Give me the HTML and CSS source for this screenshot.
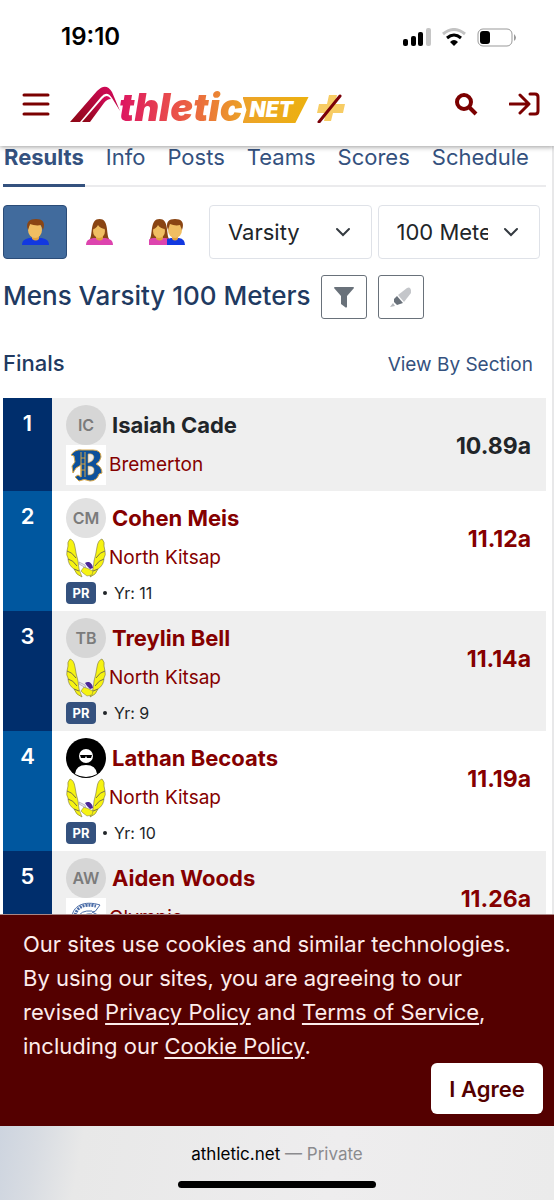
FILE: index.html
```html
<!doctype html>
<html lang="en">
  <head>
    <meta charset="utf-8">
    <title>Mens Varsity 100 Meters - Athletic.net</title>
    <meta name="viewport" content="width=device-width, initial-scale=1">
    <link rel="stylesheet" href="styles.css">
  </head>
  <body>
    <svg class="defs" aria-hidden="true">
      <defs>
        <g id="man-head">
          <path d="M0 26c0-5 4-7 9-7h9c5 0 9 2 9 7z" fill="#1238e0" />
          <path d="M10 15h7v5q-3 3-7 0z" fill="#e0a040" />
          <ellipse cx="13" cy="11" rx="7" ry="8" fill="#f0be62" />
          <path d="M6 11C3 3 8 0 14 0s10 3 7 11l-2-5c-4 1-8 0-11-1z" fill="#8a4513" />
        </g>
        <g id="woman-head">
          <path d="M4 20C7 14 4 0 13.500 0S20 14 23 20z" fill="#8a4513" />
          <path d="M0 26c0-5 4-7 9-7h9c5 0 9 2 9 7z" fill="#dd44ae" />
          <path d="M10 15h7v5q-3 3-7 0z" fill="#e0a040" />
          <ellipse cx="13" cy="12" rx="6" ry="7" fill="#f0be62" />
          <path d="M7 10c0-5 3-7 7-7s6 3 6 7c-4 0-7-2-8-4-1 2-3 4-5 4z" fill="#8a4513" />
        </g>
        <symbol id="viking" viewBox="0 0 40 40">
          <g fill="#f6f312" stroke="#77724a" stroke-width=".6">
            <path d="M4 1q4 1 5 8 1 7 3 14 0 8 4 16-6-2-8-8-6-4-6-11-2-3-1-7l1-5q-1-4 2-7z" />
            <path d="M1 13q5 1 9 7M2 21q5 1 9 7M8 31l5 2" fill="none" stroke-width="1" />
            <path d="M36 1q-4 1-5 8-1 7-3 14 0 8-4 16 6-2 8-8 6-4 6-11 2-3 1-7l-1-5q1-4-2-7z" />
            <path d="M39 13q-5 1-9 7M38 21q-5 1-9 7M32 31l-5 2" fill="none" stroke-width="1" />
            <path d="M15 33l3-4 5 2 4 2-1 4-5 1-4-3z" stroke-width=".5" />
          </g>
          <path d="M19 25c3-2 7-1 8 5l-3 1-3-3z" fill="#4b2797" />
          <path d="M13 24l6 3 1 3-7-4z" fill="#e4e2ea" stroke="#88819b" stroke-width=".5" />
        </symbol>
      </defs>
    </svg>

    <div class="status-bar">
      <span class="clock">19:10</span>
      <div class="status-icons">
        <svg width="28" height="19" viewBox="0 0 28 19">
          <rect x="0" y="11" width="5" height="7" rx="2" />
          <rect x="8" y="8" width="5" height="10" rx="2" />
          <rect x="15" y="4" width="5" height="14" rx="2" />
          <rect x="23" y="0" width="5" height="18" rx="2" fill="#c6c6c6" />
        </svg>
        <svg width="24" height="18" viewBox="0 0 24 18" fill="none" stroke-width="3">
          <path d="M1 6q11-9 22 0" stroke="#c3c3c3" />
          <path d="M5 10q7-6 14 0" stroke="#000" />
          <path d="M8 14q4-4 8 0l-4 4z" fill="#000" />
        </svg>
        <svg width="40" height="19" viewBox="0 0 40 19">
          <rect x="1" y="1" width="34" height="17" rx="5" fill="none" stroke="#999" />
          <rect x="3" y="3" width="10" height="13" rx="3" />
          <path d="M37 6q4 4 0 7z" fill="#999" />
        </svg>
      </div>
    </div>

    <header class="header">
      <button class="icon-button menu" aria-label="Menu">
        <svg width="28" height="24" viewBox="0 0 28 24" stroke="currentColor" stroke-width="3">
          <path d="M2 3h24M2 12h24M2 22h24" stroke-linecap="round" />
        </svg>
      </button>
      <a href="#" class="logo">
        <svg width="52" height="38" viewBox="0 0 52 38">
          <defs>
            <linearGradient id="mark" x1="0" y1="1" x2="1" y2="0">
              <stop offset="0" stop-color="#8c0714" />
              <stop offset="1" stop-color="#d90a60" />
            </linearGradient>
          </defs>
          <path d="M0 37L27 6Q36-3 42 7l8 19-8-13q-5-8-11-1L10 37z" fill="url(#mark)" />
          <path d="M12 37l20-23q5-6 9 0-4 0-7 4L20 37z" fill="url(#mark)" />
        </svg>
        <span class="logo-text">thletic</span>
        <span class="logo-net">NET</span>
        <svg class="logo-plus" width="28" height="29" viewBox="0 0 28 29">
          <path d="M12 1h8l-2 9h10l-2 9H16l-2 8H7l2-8H0l2-9h8z" fill="#f7cc64" />
          <path d="M2 28L23 2" stroke="#7b0008" stroke-width="3" stroke-linecap="round" />
        </svg>
      </a>
      <div class="header-actions">
        <button class="icon-button" aria-label="Search">
          <svg width="24" height="24" viewBox="0 0 24 24" fill="none" stroke="currentColor">
            <circle cx="10" cy="10" r="7" stroke-width="4" />
            <path d="M15 15l7 7" stroke-width="4" />
          </svg>
        </button>
        <button class="icon-button" aria-label="Log in">
          <svg width="31" height="24" viewBox="0 0 31 24" fill="none" stroke="currentColor" stroke-width="3" stroke-linecap="round" stroke-linejoin="round">
            <path d="M1 12h18M11 3l9 9-9 9M21 2h5q3 0 3 3v14q0 3-3 3h-5" />
          </svg>
        </button>
      </div>
    </header>

    <main class="content">
      <nav class="tabs">
        <a href="#" class="tab active">Results</a>
        <a href="#" class="tab">Info</a>
        <a href="#" class="tab">Posts</a>
        <a href="#" class="tab">Teams</a>
        <a href="#" class="tab">Scores</a>
        <a href="#" class="tab">Schedule</a>
      </nav>

      <div class="filters">
        <div class="genders">
          <button class="gender active" aria-label="Mens">
            <svg width="27" height="26" viewBox="0 0 27 26"><use href="#man-head" /></svg>
          </button>
          <button class="gender" aria-label="Womens">
            <svg width="27" height="26" viewBox="0 0 27 26"><use href="#woman-head" /></svg>
          </button>
          <button class="gender both" aria-label="Both">
            <svg width="36" height="26" viewBox="0 0 36 26">
              <use href="#woman-head" x="-3" />
              <path d="M18 26v-6q6-2 12-1 6 1 6 7z" fill="#1238e0" />
              <path d="M23 15h6v5q-3 3-6 0z" fill="#e0a040" />
              <ellipse cx="26" cy="11" rx="7" ry="8" fill="#f0be62" />
              <path d="M19 11c-3-8 1-11 7-11s10 3 7 11l-2-5c-4 1-7 0-10-1z" fill="#8a4513" />
            </svg>
          </button>
        </div>
        <div class="select">
          <select aria-label="Division">
            <option>Varsity</option>
            <option>Junior Varsity</option>
          </select>
          <svg class="chevron" width="16" height="10" viewBox="0 0 16 10"><path d="M2 2l6 6 6-6" /></svg>
        </div>
        <div class="select">
          <select aria-label="Event">
            <option>100 Meters</option>
            <option>200 Meters</option>
          </select>
          <svg class="chevron" width="16" height="10" viewBox="0 0 16 10"><path d="M2 2l6 6 6-6" /></svg>
        </div>
      </div>

      <div class="event">
        <h1>Mens Varsity 100 Meters</h1>
        <button class="tool" aria-label="Filter">
          <svg width="20" height="21" viewBox="0 0 20 21"><path d="M0 1q0-1 1-1h18q1 0 1 1L13 9v11q-1 1-2 0l-4-3V9z" fill="#69717a" /></svg>
        </button>
        <button class="tool" aria-label="Highlight">
          <svg width="22" height="20" viewBox="0 0 22 20">
            <path d="M8 8l9-7q2-1 3 0l1 2v3l-7 9z" fill="#c4c6ca" />
            <path d="M7 9l6 7-3 1-3 1-3-3 0-3z" fill="#69717a" />
            <path d="M3 16l2 3-5 1z" fill="#b4b7bc" />
          </svg>
        </button>
      </div>

      <div class="round">
        <h2>Finals</h2>
        <a href="#">View By Section</a>
      </div>

      <table class="results">
        <tbody>
          <tr>
            <td class="place">1</td>
            <td class="athlete">
              <div class="line"><span class="avatar">IC</span><strong class="name plain">Isaiah Cade</strong></div>
              <div class="line">
                <svg class="crest" viewBox="0 0 40 40">
                  <path d="M0 0h40v40H0z" fill="#fff" />
                  <path d="M5 10q4-6 11-5h11q8 0 8 7-1 5-5 7 6 3 6 9l-3 1q-2 7-9 7-6-3-11 0l-4-4 3-2 3 2V20l-5 3-3 5-1-7 3-4-1-6z" fill="#0c509b" stroke="#d6a546" stroke-width="1" />
                  <path d="M22 9q5-1 6 3 0 4-6 6zM22 21q7 0 6 5 0 4-6 4z" fill="#efefef" stroke="#d6a546" stroke-width=".6" />
                  <path d="M15 7v25M19 7v25M15 13h4M15 19h4M15 25h4" stroke="#d6a546" fill="none" />
                </svg>
                <a href="#" class="team">Bremerton</a>
              </div>
            </td>
            <td class="mark plain">10.89a</td>
          </tr>
          <tr>
            <td class="place">2</td>
            <td class="athlete">
              <div class="line"><span class="avatar">CM</span><a href="#" class="name">Cohen Meis</a></div>
              <div class="line"><svg class="crest"><use href="#viking" /></svg><a href="#" class="team">North Kitsap</a></div>
              <div class="meta"><span class="pr">PR</span><span class="dot"></span>Yr: 11</div>
            </td>
            <td class="mark"><a href="#">11.12a</a></td>
          </tr>
          <tr>
            <td class="place">3</td>
            <td class="athlete">
              <div class="line"><span class="avatar">TB</span><a href="#" class="name">Treylin Bell</a></div>
              <div class="line"><svg class="crest"><use href="#viking" /></svg><a href="#" class="team">North Kitsap</a></div>
              <div class="meta"><span class="pr">PR</span><span class="dot"></span>Yr: 9</div>
            </td>
            <td class="mark"><a href="#">11.14a</a></td>
          </tr>
          <tr>
            <td class="place">4</td>
            <td class="athlete">
              <div class="line">
                <svg class="crest" viewBox="0 0 40 40">
                  <circle cx="20" cy="20" r="20" />
                  <circle cx="20" cy="18" r="7" fill="#fff" />
                  <path d="M9 36q1-9 11-9t11 9q-11 6-22 0z" fill="#fff" />
                  <path d="M14 17h12l-1 3-4 0-1-2-1 2h-4z" />
                </svg>
                <a href="#" class="name">Lathan Becoats</a>
              </div>
              <div class="line"><svg class="crest"><use href="#viking" /></svg><a href="#" class="team">North Kitsap</a></div>
              <div class="meta"><span class="pr">PR</span><span class="dot"></span>Yr: 10</div>
            </td>
            <td class="mark"><a href="#">11.19a</a></td>
          </tr>
          <tr>
            <td class="place">5</td>
            <td class="athlete">
              <div class="line"><span class="avatar">AW</span><a href="#" class="name">Aiden Woods</a></div>
              <div class="line">
                <svg class="crest" viewBox="0 0 40 40">
                  <path d="M0 0h40v40H0z" fill="#fff" />
                  <g fill="none" stroke="#4b6da8">
                    <path d="M6 20C6 8 18 2 34 7l-3 4q-1 3-5 3l8 4" />
                    <path d="M9 20C9 10 17 5 30 8" stroke-width="3" stroke-dasharray="2 1" />
                    <path d="M12 20q2-8 14-7M16 20q2-5 10-4" />
                  </g>
                </svg>
                <a href="#" class="team">Olympic</a>
              </div>
            </td>
            <td class="mark"><a href="#">11.26a</a></td>
          </tr>
        </tbody>
      </table>
    </main>

    <section class="cookies">
      <p>Our sites use cookies and similar technologies. By using our sites, you are agreeing to our revised <a href="#">Privacy Policy</a> and <a href="#">Terms of Service</a>, including our <a href="#">Cookie Policy</a>.</p>
      <button>I Agree</button>
    </section>

    <footer class="browser-bar">
      <div>athletic.net <span>— Private</span></div>
      <div class="home-indicator"></div>
    </footer>
  </body>
</html>
```

FILE: styles.css
```css
* {
  margin: 0;
  padding: 0;
  box-sizing: border-box;
}

body {
  height: 100vh;
  overflow: hidden;

  display: flex;
  flex-direction: column;

  font-family: Inter, "Liberation Sans", sans-serif;
  font-size: 22px;
  line-height: 26px;
  color: #212529;
  background: #fff;
}

a {
  color: inherit;
  text-decoration: none;
}

button, select {
  font: inherit;
  color: inherit;
  background: none;
  border: none;
}

svg {
  display: block;
  flex: none;
}

.defs {
  position: absolute;
  width: 0;
  height: 0;
}

/* phone status bar */

.status-bar {
  position: relative;
  z-index: 2;
  flex: none;
  height: 74px;
  padding: 0 37px 0 61px;

  display: flex;
  align-items: center;
  justify-content: space-between;

  background: #fff;
}

.clock {
  font-size: 24px;
  font-weight: 600;
  color: #000;
}

.status-icons {
  display: flex;
  align-items: center;
  gap: 11px;
}

/* site header */

.header {
  position: relative;
  z-index: 1;
  flex: none;
  height: 72px;
  padding: 0 14px 12px 22px;

  display: flex;
  align-items: center;

  background: #fff;
  box-shadow: 0 1px 5px rgba(0, 0, 0, 0.4);
}

.icon-button {
  color: #7b0000;
}

.logo {
  margin-left: 20px;
  height: 38px;

  display: flex;
  align-items: flex-end;
}

.logo-text {
  margin-left: -3px;

  font-size: 38px;
  font-weight: 900;
  font-style: italic;
  line-height: 32px;

  color: transparent;
  background: linear-gradient(90deg, #dc1462, #ea514a 45%, #eca226);
  background-clip: text;
  -webkit-background-clip: text;
}

.logo-net {
  width: 66px;
  height: 26px;
  padding-left: 7px;

  font-size: 21px;
  font-weight: 900;
  font-style: italic;
  color: #fff;
  background: linear-gradient(90deg, #eda32a, #ecb10e);
  clip-path: polygon(0 0, 100% 0, 80% 100%, 0 100%, 6% 50%);
}

.logo-plus {
  margin-left: 8px;
}

.header-actions {
  margin-left: auto;

  display: flex;
  gap: 31px;
}

/* meet content */

.content {
  flex: 1;
  min-height: 0;
  overflow: hidden;
  padding: 0 6px 0 3px;

  border-right: 2px solid #e8e8e9;
}

.tabs {
  height: 41px;

  display: flex;
  gap: 20px;

  color: #34517e;
  border-bottom: 2px solid #ebebed;
}

.tab {
  height: 41px;
  padding: 0 1px;

  line-height: 22px;
}

.tab.active {
  font-weight: 700;
  border-bottom: 3px solid #34517e;
}

.filters {
  margin: 18px 6px 0 0;
  height: 54px;

  display: flex;
  gap: 6px;
}

.genders {
  display: flex;
}

.gender {
  width: 64px;

  display: flex;
  align-items: center;
  justify-content: center;

  border-radius: 4px;
}

.gender.active {
  background: #416b9d;
  border: 1px solid #2b4c78;
}

.gender.both {
  width: 72px;
}

.select {
  position: relative;
  flex: 1;
  min-width: 0;
}

.select select {
  width: 100%;
  height: 100%;
  padding: 0 51px 0 18px;

  appearance: none;
  border: 1px solid #dfe2e8;
  border-radius: 4px;
}

.chevron {
  position: absolute;
  top: 22px;
  right: 21px;

  pointer-events: none;
  fill: none;
  stroke: #343a40;
  stroke-width: 2;
  stroke-linecap: round;
}

.event {
  margin-top: 16px;

  display: flex;
  align-items: center;
  gap: 11px;

  color: #213a61;
}

h1 {
  padding-bottom: 3px;

  font-size: 26px;
  font-weight: 500;
  line-height: 30px;
  white-space: nowrap;
}

.tool {
  width: 46px;
  height: 44px;

  display: flex;
  align-items: center;
  justify-content: center;

  border: 1px solid #69717a;
  border-radius: 3px;
}

.round {
  height: 26px;
  margin: 31px 13px 22px 0;

  display: flex;
  align-items: baseline;
  justify-content: space-between;

  color: #213a61;
}

h2 {
  font-size: 22px;
  font-weight: 500;
  line-height: 26px;
}

.round a {
  font-size: 19px;
  color: #34517e;
}

.results {
  width: 100%;
  border-collapse: collapse;
}

.results tr {
  background: #fff;
}

.results tr:nth-child(odd) {
  background: #efefef;
}

.results td {
  vertical-align: top;
}

.results .place {
  width: 49px;
  padding-top: 12px;

  font-weight: 600;
  text-align: center;
  color: #fff;
  background: #00579f;
}

.results tr:nth-child(odd) .place {
  background: #002e6c;
}

.athlete {
  padding: 7px 0 6px 14px;
}

.line {
  height: 40px;

  display: flex;
  align-items: center;
}

.avatar {
  width: 40px;
  height: 40px;

  font-size: 16px;
  font-weight: 600;
  line-height: 40px;
  text-align: center;
  color: #7b7b7b;
  background: #d6d6d6;
  border-radius: 50%;
}

tr:nth-child(even) .avatar {
  background: #e1e1e1;
}

.crest {
  width: 40px;
  height: 40px;
}

.name {
  margin-left: 6px;

  font-weight: 700;
  color: #850000;
}

.team {
  margin-left: 3px;

  font-size: 19px;
  color: #850000;
}

.meta {
  height: 27px;
  padding-top: 2px;

  display: flex;
  align-items: center;

  font-size: 16px;
}

.pr {
  width: 30px;
  height: 22px;

  font-size: 13px;
  font-weight: 700;
  line-height: 22px;
  text-align: center;
  color: #fff;
  background: #34517e;
  border-radius: 4px;
}

.dot {
  width: 4px;
  height: 4px;
  margin: 0 7px;

  background: #212529;
  border-radius: 50%;
}

.mark {
  padding: 35px 15px 0 0;

  font-size: 23px;
  font-weight: 700;
  text-align: right;
  color: #850000;
}

.plain {
  color: #212529;
}

/* cookie notice */

.cookies {
  flex: none;
  padding: 12px 11px 12px 23px;

  display: flex;
  flex-direction: column;

  line-height: 34px;
  color: #fdeceb;
  background: #540000;
  border-top: 1px solid #a98686;
}

.cookies p {
  max-width: 490px;
}

.cookies a {
  text-decoration: underline;
  text-decoration-thickness: 2px;
  text-underline-offset: 3px;
}

.cookies button {
  align-self: flex-end;
  width: 112px;
  height: 51px;

  font-weight: 600;
  color: #540000;
  background: #fff;
  border-radius: 6px;
}

/* browser address bar */

.browser-bar {
  flex: none;
  height: 74px;
  padding-top: 15px;

  display: flex;
  flex-direction: column;
  align-items: center;
  gap: 14px;

  font-size: 17px;
  color: #000;
  background: linear-gradient(100deg, #cdd4df 0, #d8dce2 7%, #e8e8e8 15%, #eeedee 60%, #ebebeb);
}

.browser-bar span {
  color: #8b8b8e;
}

.home-indicator {
  width: 198px;
  height: 7px;

  background: #000;
  border-radius: 4px;
}
```
